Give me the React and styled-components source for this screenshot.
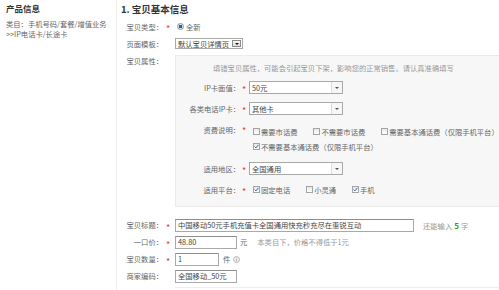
import styled, { createGlobalStyle } from "styled-components";

const GlobalStyle = createGlobalStyle`
  html, body {
    margin: 0;
    padding: 0;
    background: #fff;
  }
  body {
    font-family: "Noto Sans CJK SC", "Noto Sans", sans-serif;
    font-size: 7.3px;
    color: #666;
  }
`;

const Page = styled.div`
  display: flex;
  width: 499px;
  height: 290px;
  overflow: hidden;
`;

const Sidebar = styled.aside`
  width: 110px;
  flex: none;
  padding: 2px 0 0 6px;
  border-right: 1px solid #ededed;
`;

const SideTitle = styled.div`
  font-size: 8.5px;
  font-weight: bold;
  color: #333;
  line-height: 12px;
`;

const SideText = styled.div`
  margin-top: 6px;
  line-height: 9.5px;
  color: #666;
  white-space: nowrap;
`;

const Main = styled.main`
  flex: 1;
  min-width: 0;
  padding-left: 4px;
  overflow: hidden;
`;

const Heading = styled.h2`
  margin: 0;
  height: 18px;
  line-height: 18px;
  font-size: 9.5px;
  font-weight: bold;
  color: #333;
`;

const Row = styled.div`
  display: flex;
  align-items: ${(p) => (p.$top ? "flex-start" : "center")};
  height: ${(p) => (p.$top ? "auto" : "17px")};
  margin-top: ${(p) => p.$mt || 0}px;
  white-space: nowrap;
`;

const Label = styled.span`
  width: ${(p) => p.$w || 42}px;
  flex: none;
  text-align: right;
  line-height: 12px;
  color: #666;
`;

const Star = styled.span`
  width: ${(p) => p.$w || 12}px;
  flex: none;
  box-sizing: border-box;
  padding-left: ${(p) => p.$pl ?? 3}px;
  color: #e4393c;
  font-size: 9px;
  line-height: 9px;
  transform: translateY(2px);
`;

const Radio = styled.span`
  width: 7px;
  height: 7px;
  margin: 0 2px 0 2px;
  box-sizing: border-box;
  border-radius: 50%;
  border: 1px solid #8e8e8e;
  background: radial-gradient(circle, #1f63a8 0 1.6px, #dfe8ef 2px);
  flex: none;
`;

const SelectBox = styled.div`
  display: flex;
  align-items: center;
  justify-content: space-between;
  box-sizing: border-box;
  width: ${(p) => p.$w}px;
  height: ${(p) => p.$h}px;
  border: 1px solid #a8a8a8;
  background: #fff;
  padding-left: 2px;
  color: #444;
`;

const Arrow = styled.span`
  display: flex;
  align-items: center;
  justify-content: center;
  align-self: stretch;
  box-sizing: border-box;
  width: ${(p) => (p.$boxed ? 9 : 11)}px;
  margin: ${(p) => (p.$boxed ? "1px" : "0")};
  border: ${(p) => (p.$boxed ? "1px solid #8a8a8a" : "none")};
  border-left: 1px solid ${(p) => (p.$boxed ? "#8a8a8a" : "#dcdcdc")};
  background: ${(p) => (p.$boxed ? "linear-gradient(#fafafa, #dedede)" : "#f6f6f6")};

  &::after {
    content: "";
    border-left: 2px solid transparent;
    border-right: 2px solid transparent;
    border-top: 2.5px solid ${(p) => (p.$boxed ? "#111" : "#555")};
  }
`;

const Panel = styled.div`
  width: 330px;
  flex: none;
  box-sizing: border-box;
  background: #f7f7f7;
  border: 1px solid #ebebeb;
  padding: 7px 0 10px 0;
  display: flex;
  flex-direction: column;
  gap: 8px;
`;

const Notice = styled.div`
  padding-left: 37px;
  line-height: 10px;
  color: #999;
`;

const InnerRow = styled.div`
  display: flex;
  align-items: ${(p) => (p.$top ? "flex-start" : "center")};
  height: ${(p) => (p.$top ? "auto" : "13px")};
  padding-top: ${(p) => (p.$top ? 1 : 0)}px;
`;

const CheckLines = styled.div`
  display: flex;
  flex-direction: column;
`;

const CheckLine = styled.div`
  display: flex;
  align-items: center;
  height: 15px;
`;

const CheckItem = styled.span`
  display: flex;
  align-items: center;
  margin-right: 12px;
  color: #666;
`;

const Box = styled.span`
  display: flex;
  align-items: center;
  justify-content: center;
  width: 7px;
  height: 7px;
  margin: 0 1px 0 4px;
  box-sizing: border-box;
  border: 1px solid #a4a4a4;
  background: linear-gradient(#e9e9e9, #fff);
  flex: none;
`;

const Input = styled.input`
  box-sizing: border-box;
  width: ${(p) => p.$w}px;
  height: 13px;
  margin: 0;
  padding: 0 2px;
  border: 1px solid #a9a9a9;
  border-top-color: #8d8d8d;
  background: #fff;
  font-family: "Noto Sans CJK SC", "Noto Sans", sans-serif;
  font-size: 7.3px;
  color: #444;
  outline: none;
`;

const Unit = styled.span`
  margin-left: ${(p) => p.$ml || 3}px;
  color: ${(p) => (p.$hint ? "#999" : "#666")};
`;

const Count = styled.b`
  color: #3a9a16;
  font-size: 8px;
  margin: 0 2px;
`;

const InfoIcon = styled.svg`
  margin-left: 3px;
  flex: none;
`;

const Rule = styled.div`
  margin: 2.5px 0 0 54px;
  border-top: 1px solid #eeeeee;
`;

const Check = ({ on }) => (
  <Box>
    {on && (
      <svg width="5" height="5" viewBox="0 0 5 5">
        <path d="M0.6 2.6 L1.9 3.9 L4.4 0.9" fill="none" stroke="#2d5fb0" strokeWidth="1" />
      </svg>
    )}
  </Box>
);

const Option = ({ on, children }) => (
  <CheckItem>
    <Check on={on} />
    {children}
  </CheckItem>
);

const Select = ({ w, h, boxed, children }) => (
  <SelectBox $w={w} $h={h}>
    <span>{children}</span>
    <Arrow $boxed={boxed} />
  </SelectBox>
);

const App = () => (
  <>
    <GlobalStyle />
    <Page>
      <Sidebar>
        <SideTitle>产品信息</SideTitle>
        <SideText>
          类目：手机号码/套餐/增值业务
          <br />
          &gt;&gt;IP电话卡/长途卡
        </SideText>
      </Sidebar>
      <Main>
        <Heading>1. 宝贝基本信息</Heading>
        <Row>
          <Label>宝贝类型：</Label>
          <Star>*</Star>
          <Radio />
          <span>全新</span>
        </Row>
        <Row>
          <Label>页面模板：</Label>
          <Star />
          <Select w={68} h={11} boxed>
            默认宝贝详情页
          </Select>
        </Row>
        <Row $top $mt={3}>
          <Label>宝贝属性：</Label>
          <Star />
          <Panel>
            <Notice>填错宝贝属性，可能会引起宝贝下架，影响您的正常销售。请认真准确填写</Notice>
            <InnerRow>
              <Label $w={64}>IP卡面值：</Label>
              <Star $w={9} $pl={2}>*</Star>
              <Select w={94} h={13}>50元</Select>
            </InnerRow>
            <InnerRow>
              <Label $w={64}>各类电话IP卡：</Label>
              <Star $w={9} $pl={2}>*</Star>
              <Select w={94} h={13}>其他卡</Select>
            </InnerRow>
            <InnerRow $top>
              <Label $w={64}>资费说明：</Label>
              <Star $w={9} $pl={2}>*</Star>
              <CheckLines>
                <CheckLine>
                  <Option>需要市话费</Option>
                  <Option>不需要市话费</Option>
                  <Option>需要基本通话费（仅限手机平台）</Option>
                </CheckLine>
                <CheckLine>
                  <Option on>不需要基本通话费（仅限手机平台）</Option>
                </CheckLine>
              </CheckLines>
            </InnerRow>
            <InnerRow>
              <Label $w={64}>适用地区：</Label>
              <Star $w={9} $pl={2}>*</Star>
              <Select w={94} h={13}>全国通用</Select>
            </InnerRow>
            <InnerRow>
              <Label $w={64}>适用平台：</Label>
              <Star $w={9} $pl={2}>*</Star>
              <Option on>固定电话</Option>
              <Option>小灵通</Option>
              <Option on>手机</Option>
            </InnerRow>
          </Panel>
        </Row>
        <Row $mt={9.5}>
          <Label>宝贝标题：</Label>
          <Star>*</Star>
          <Input $w={239} readOnly value="中国移动50元手机充值卡全国通用快充秒充尽在惠锐互动" />
          <Unit $ml={9} $hint>
            还能输入<Count>5</Count>字
          </Unit>
        </Row>
        <Row>
          <Label>一口价：</Label>
          <Star>*</Star>
          <Input $w={62} readOnly value="48.80" />
          <Unit>元</Unit>
          <Unit $ml={10} $hint>本类目下，价格不得低于1元</Unit>
        </Row>
        <Row>
          <Label>宝贝数量：</Label>
          <Star>*</Star>
          <Input $w={44} readOnly value="1" />
          <Unit $ml={4}>件</Unit>
          <InfoIcon width="7" height="7" viewBox="0 0 7 7">
            <circle cx="3.5" cy="3.5" r="3" fill="#f2f2f2" stroke="#aaa" strokeWidth="0.8" />
            <rect x="3.1" y="3" width="0.8" height="2.3" fill="#999" />
            <rect x="3.1" y="1.6" width="0.8" height="0.8" fill="#999" />
          </InfoIcon>
        </Row>
        <Row>
          <Label>商家编码：</Label>
          <Star />
          <Input $w={62} readOnly value="全国移动_50元" />
        </Row>
        <Rule />
      </Main>
    </Page>
  </>
);

export default App;
